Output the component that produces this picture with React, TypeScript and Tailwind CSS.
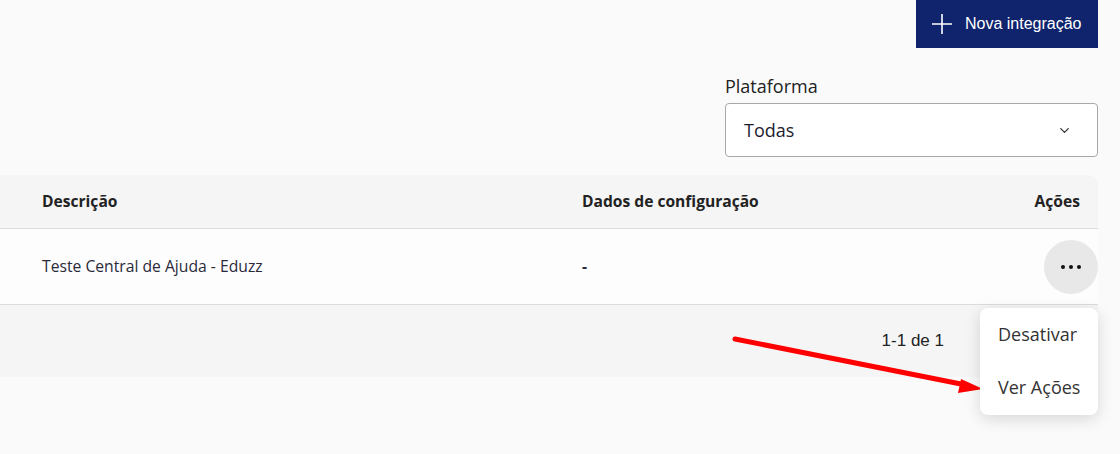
import { ChevronDown } from 'lucide-react';

const openSans = { fontFamily: '"Open Sans", "Noto Sans", sans-serif' };
const arial = { fontFamily: '"Liberation Sans", Arial, sans-serif' };

function PointerArrow() {
  return (
    <svg className="absolute left-0 top-0 pointer-events-none" width="1120" height="454">
      <line x1="735" y1="339" x2="966" y2="385" stroke="#ff0000" strokeWidth="5" strokeLinecap="round" />
      <polygon points="983,389 961,379 958,393" fill="#ff0000" />
    </svg>
  );
}

export default function App() {
  return (
    <div
      className="relative w-full h-[454px] overflow-hidden bg-[#fafafa] pr-[22px] text-[#333]"
      style={openSans}
    >
      <div className="flex justify-end">
        <button
          className="flex items-center gap-[13px] h-[48px] w-[182px] pl-[16px] bg-[#0f246c] text-white text-[16px]"
          style={arial}
        >
          <svg width="20" height="20" viewBox="0 0 20 20">
            <path d="M10 0v20M0 10h20" stroke="#fff" strokeWidth="1.6" />
          </svg>
          <span>Nova integração</span>
        </button>
      </div>

      <div className="flex justify-end mt-[26px]">
        <div className="w-[373px]">
          <label className="block text-[18px] leading-[25px] text-[#222] mb-[4px]">Plataforma</label>
          <div className="flex items-center justify-between h-[54px] border border-[#a8a8a8] rounded-[4px] bg-white pl-[18px] pr-[25px]">
            <span className="text-[18px] text-[#1c1c2e]">Todas</span>
            <ChevronDown size={15} strokeWidth={2} className="text-[#333]" />
          </div>
        </div>
      </div>

      <div className="mt-[18px] rounded-tr-[10px] overflow-hidden">
        <div className="flex items-center h-[54px] bg-[#f5f5f5] border-b border-[#dcdcdc] text-[15.6px] font-bold text-[#222]">
          <div className="w-[582px] pl-[42px]">Descrição</div>
          <div className="flex-1">Dados de configuração</div>
          <div className="pr-[18px]">Ações</div>
        </div>
        <div className="flex items-center h-[76px] bg-[#fdfdfd] border-b border-[#dcdcdc] text-[15.7px] text-[#2a2a3a]">
          <div className="w-[582px] pl-[42px]">Teste Central de Ajuda - Eduzz</div>
          <div className="flex-1 font-bold">-</div>
          <div className="w-[54px] h-[54px] rounded-full bg-[#e8e8e8] flex items-center justify-center gap-[4px]">
            <span className="w-[4px] h-[4px] rounded-full bg-[#111]" />
            <span className="w-[4px] h-[4px] rounded-full bg-[#111]" />
            <span className="w-[4px] h-[4px] rounded-full bg-[#111]" />
          </div>
        </div>
        <div
          className="flex items-center justify-end h-[72px] bg-[#f5f5f5] pr-[154px] text-[17px] text-[#222]"
          style={arial}
        >
          1-1 de 1
        </div>
      </div>

      <PointerArrow />

      <div className="absolute left-[980px] top-[308px] w-[118px] h-[107px] rounded-[8px] bg-white shadow-[0_4px_16px_rgba(0,0,0,0.14)] pt-[1px] flex flex-col gap-[3px] text-[18px] text-[#333]">
        <div className="h-[50px] flex items-center pl-[18px]">Desativar</div>
        <div className="h-[50px] flex items-center pl-[18px]">Ver Ações</div>
      </div>
    </div>
  );
}
